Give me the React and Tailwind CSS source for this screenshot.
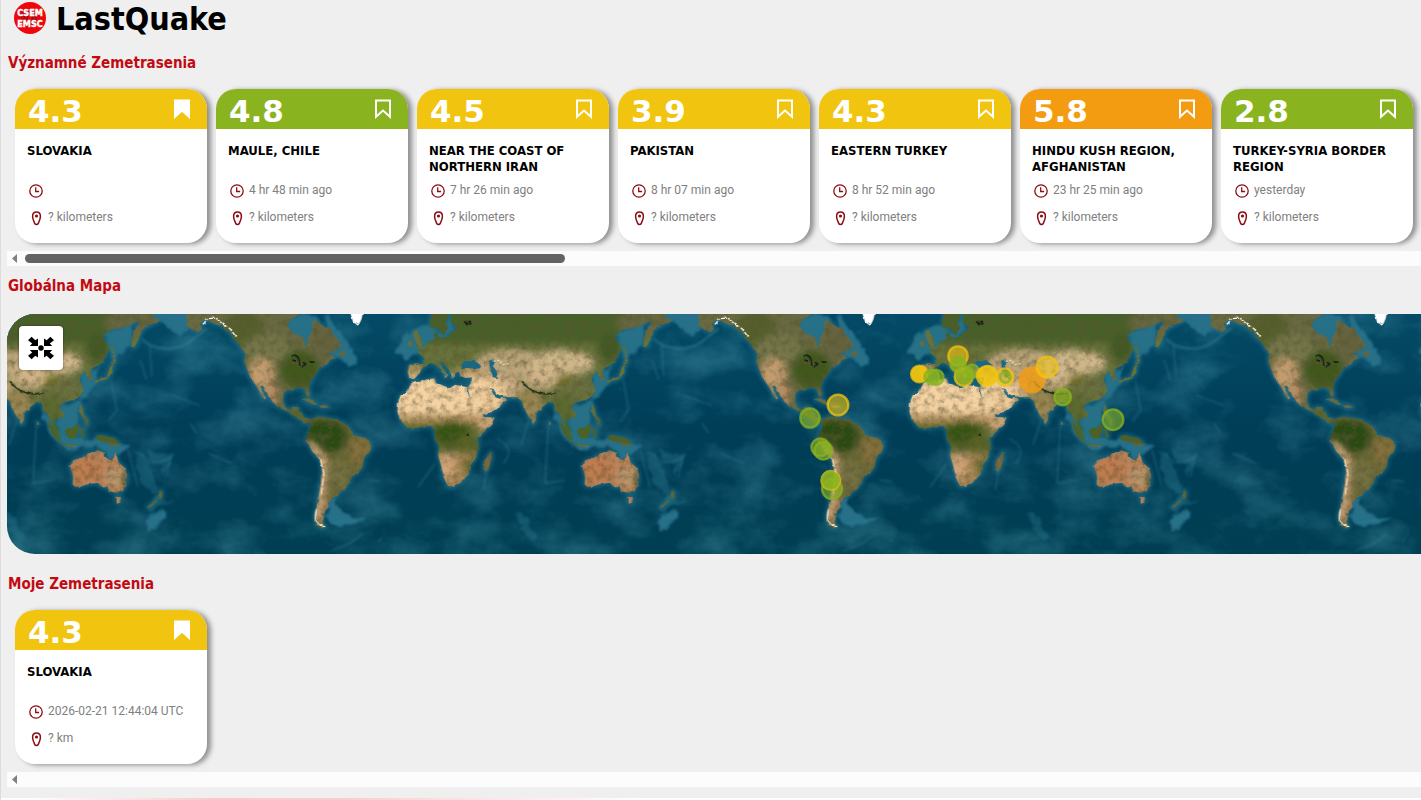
import { useState } from "react"

const quakes = [
  { id: 1, mag: "4.3", region: "SLOVAKIA", time: "", distance: "? kilometers", level: "yellow", saved: true },
  { id: 2, mag: "4.8", region: "MAULE, CHILE", time: "4 hr 48 min ago", distance: "? kilometers", level: "green" },
  { id: 3, mag: "4.5", region: "NEAR THE COAST OF NORTHERN IRAN", time: "7 hr 26 min ago", distance: "? kilometers", level: "yellow" },
  { id: 4, mag: "3.9", region: "PAKISTAN", time: "8 hr 07 min ago", distance: "? kilometers", level: "yellow" },
  { id: 5, mag: "4.3", region: "EASTERN TURKEY", time: "8 hr 52 min ago", distance: "? kilometers", level: "yellow" },
  { id: 6, mag: "5.8", region: "HINDU KUSH REGION, AFGHANISTAN", time: "23 hr 25 min ago", distance: "? kilometers", level: "orange" },
  { id: 7, mag: "2.8", region: "TURKEY-SYRIA BORDER REGION", time: "yesterday", distance: "? kilometers", level: "green" },
]

const myQuakes = [
  { id: 1, mag: "4.3", region: "SLOVAKIA", time: "2026-02-21 12:44:04 UTC", distance: "? km", level: "yellow", saved: true },
]

const levelClasses = {
  yellow: "bg-[#f1c40f]",
  green: "bg-[#8ab320]",
  orange: "bg-[#f39c12]",
}

const YELLOW = "#f1c40f"
const GREEN = "#8ab320"
const ORANGE = "#f39c12"

// [x, y, radius, ring colour, fill opacity]
const markers = [
  [2758, 222, 25, YELLOW, 0.95],
  [2795, 231, 22, GREEN, 0.7],
  [2808, 232, 23, GREEN, 0.7],
  [2874, 168, 29, YELLOW, 0.6],
  [2874, 193, 23, GREEN, 0.85],
  [2891, 231, 27, YELLOW, 0.6],
  [2894, 224, 25, GREEN, 0.7],
  [2917, 214, 20, GREEN, 0.6],
  [2960, 228, 29, YELLOW, 0.7],
  [2964, 224, 26, YELLOW, 0.5],
  [3014, 231, 26, YELLOW, 0.5],
  [3016, 232, 16, GREEN, 0.3],
  [3096, 240, 37, ORANGE, 0.8],
  [3141, 201, 31, YELLOW, 0.55],
  [3188, 291, 25, GREEN, 0.65],
  [3339, 359, 31, GREEN, 0.6],
  [2514, 315, 31, YELLOW, 0.6],
  [2430, 354, 29, GREEN, 0.65],
  [2461, 442, 27, GREEN, 0.6],
  [2470, 452, 27, GREEN, 0.6],
  [2496, 567, 30, GREEN, 0.6],
  [2492, 541, 28, YELLOW, 0.3],
  [2492, 541, 25, GREEN, 0.85],
]

const EmscLogo = () => (
  <svg className="h-8 w-8" viewBox="0 0 32 32" role="img" aria-label="CSEM EMSC">
    <circle cx="16" cy="16" r="16" fill="#ee060c" />
    <g fill="none" stroke="#8f1015" strokeWidth="1.5">
      <circle cx="16" cy="16" r="3" />
      <circle cx="16" cy="16" r="6" />
      <circle cx="16" cy="16" r="9" opacity="0.5" />
    </g>
    <g fill="#fff" stroke="#fff" strokeWidth="0.4" fontFamily="'DejaVu Sans Condensed', 'DejaVu Sans', sans-serif" fontWeight="700" fontSize="9" textAnchor="middle">
      <text x="16" y="14">CSEM</text>
      <text x="16" y="25">EMSC</text>
    </g>
  </svg>
)

const BookmarkIcon = ({ filled }) => (
  <svg className="h-5 w-4" viewBox="0 0 16 20" fill={filled ? "currentColor" : "none"} stroke="currentColor" strokeWidth="2">
    <path d="M1 1.500h14v16.300l-7-6.300-7 6.300z" />
  </svg>
)

const ClockIcon = () => (
  <svg className="h-4 w-4 shrink-0" viewBox="0 0 16 16" fill="none" stroke="#8e0c14" strokeWidth="1.3">
    <circle cx="8" cy="8" r="6.200" />
    <path d="M7.700 4.300V8.500h3.400" />
  </svg>
)

const PinIcon = () => (
  <svg className="h-4 w-4 shrink-0" viewBox="0 0 16 16" fill="none" stroke="#8e0c14" strokeWidth="1.5">
    <path d="M8.500 1.900c-2.500 0-3.900 1.900-3.900 4.300 0 3.200 1.200 5.200 2 6.900.8 1.900 3 1.900 3.800 0 .8-1.700 2-3.700 2-6.900 0-2.400-1.400-4.300-3.900-4.300z" />
    <circle cx="8.500" cy="6" r="1.600" fill="#8e0c14" stroke="none" />
  </svg>
)

const SectionTitle = ({ children }) => (
  <h2 className="pl-px text-[15px] leading-5 font-bold text-[#c20a12]">{children}</h2>
)

const QuakeCard = ({ quake }) => {
  const [saved, setSaved] = useState(Boolean(quake.saved))

  return (
    <article className="w-48 shrink-0 overflow-hidden rounded-[20px] bg-white shadow-[4px_1px_5px_rgba(0,0,0,0.4)]">
      <div className={`flex h-10 items-center justify-between pr-[17px] pl-[13px] text-white ${levelClasses[quake.level]}`}>
        <span className="pt-[3px] font-['DejaVu_Sans',sans-serif] text-[31px] leading-10 font-bold">{quake.mag}</span>
        <button type="button" aria-label="Bookmark" aria-pressed={saved} onClick={() => setSaved(!saved)}>
          <BookmarkIcon filled={saved} />
        </button>
      </div>
      <div className="px-3 pt-[14px] pb-[17px]">
        <h3 className="h-8 text-[13px] leading-4 font-bold text-black">{quake.region}</h3>
        <div className="mt-2 flex h-4 items-center gap-1 pl-px text-xs leading-[14px] text-[#808080]">
          <ClockIcon />
          <span className="pb-0.5 font-[Roboto,sans-serif] whitespace-nowrap">{quake.time}</span>
        </div>
        <div className="mt-[11px] flex h-4 items-center gap-1 pl-px text-xs leading-[14px] text-[#808080]">
          <PinIcon />
          <span className="pb-0.5 font-[Roboto,sans-serif]">{quake.distance}</span>
        </div>
      </div>
    </article>
  )
}

const ScrollTrack = ({ thumb }) => (
  <div className="flex h-[15px] items-center gap-2 bg-[#fcfcfc] pl-[5px]">
    <svg className="h-[9px] w-[5px]" viewBox="0 0 5 9" fill="#808080">
      <path d="M5 0v9L0 4.500z" />
    </svg>
    {thumb && <div className="h-[9px] w-[38.3%] rounded-full bg-[#636363]" />}
  </div>
)

const QuakeRow = ({ items, thumb }) => (
  <div>
    <div className="flex gap-[9px] overflow-hidden px-2 pt-4 pb-2">
      {items.map((quake) => (
        <QuakeCard key={quake.id} quake={quake} />
      ))}
    </div>
    <ScrollTrack thumb={thumb} />
  </div>
)

const Americas = () => (
  <>
    <path d="M560 30L558 75 575 88 592 97 606 88 602 72 612 60 628 64 645 72 668 80 690 100 702 116 716 132 724 146 736 158 733 185 744 215 752 236 763 248 777 272 790 298 797 297 787 275 780 255 790 262 803 283 822 312 842 325 862 334 882 347 898 358 915 370 928 368 945 372 925 355 908 352 905 338 896 334 896 322 877 320 872 330 858 324 849 305 851 280 862 270 880 268 893 262 914 266 918 282 928 292 931 285 926 262 934 240 950 218 958 203 980 194 990 180 1003 175 1000 163 982 166 1001 152 1025 140 1015 118 1003 108 990 80 975 84 958 68 938 60 936 92 926 112 922 140 914 134 910 112 890 104 874 94 862 78 872 58 900 42 900 30z" />
    <path d="M1014 160l8-7 14 2 1 14-12 3zM905 298l22-4 28 20-20-4zM956 317l20-2 12 7-20 3z" />
    <path d="M930 366L945 353 965 350 990 355 1008 358 1026 368 1050 384 1058 402 1078 410 1096 414 1114 428 1113 446 1100 462 1090 478 1088 502 1072 520 1055 530 1048 550 1033 570 1018 574 1014 588 998 592 988 608 986 622 975 632 972 650 966 662 978 680 966 686 950 676 942 650 950 620 955 590 962 550 966 510 960 480 938 458 925 432 918 424 921 402 932 388z" />
  </>
)

const OldWorld = () => (
  <>
    <path d="M158 30L150 64 152 84 168 86 176 82 182 102 192 108 198 90 205 82 198 66 206 44 215 50 212 72 232 76 222 92 205 108 186 114 172 112 170 92 162 100 163 118 148 124 134 138 112 156 130 172 130 192 88 194 83 216 88 234 102 238 118 220 128 204 150 188 164 192 180 208 196 224 192 236 202 224 188 204 176 184 190 190 205 205 212 224 218 236 226 220 236 210 242 228 258 234 276 232 272 250 264 262 272 288 290 318 304 342 318 344 344 330 366 314 380 300 374 292 358 296 346 292 336 276 330 264 338 266 350 282 366 288 386 292 410 292 424 302 432 324 446 350 460 374 468 366 468 340 488 320 506 306 520 308 526 330 540 344 546 362 560 385 574 408 572 390 560 364 562 354 578 358 590 346 582 330 574 318 590 306 622 298 640 284 646 264 634 240 640 224 654 216 664 240 674 238 668 216 678 200 700 188 716 164 726 140 712 126 706 106 722 90 760 84 788 74 808 62 814 70 800 92 790 118 790 136 800 140 814 114 822 90 850 74 876 62 884 46 884 30z" />
    <path d="M54 306L62 286 84 270 94 250 104 244 130 240 164 235 168 250 186 256 210 264 226 254 262 262 264 278 282 302 298 330 312 352 344 352 334 374 312 396 292 416 296 442 288 474 270 498 266 520 246 546 222 560 204 562 190 528 184 500 174 466 178 440 164 412 164 390 152 378 130 380 100 386 78 382 60 356 52 338z" />
    <path d="M334 454l2 20-10 30-6 12-10-4 2-28zM100 96l12-4 14 30 3 22-24 5 8-14-8-12zM84 124l12-4 2 16-13 6zM745 590l14 2-4 18-8-2z" />
    <path d="M606 498L618 480 640 474 662 460 680 460 690 452 706 456 708 470 732 482 738 456 746 466 752 488 768 502 777 524 776 550 764 574 744 578 728 574 718 562 704 562 690 548 662 552 640 560 620 560 614 552 616 530z" />
    <path d="M684 408l18-2 40 10 18 18-24 4-22-10-26-8zM590 392l18-6 18-14 10 6-10 34-24 6zM536 362l22 22 18 28 2 16-18-14-14-26zM578 430l46 6-2 5-44-6zM638 388l18-4-12 10 8 18-10 2zM636 318l8-2 2 26 12 18 4 16-10-2-6-20-10-16zM878 568l6 8-2 14-14 6zM864 600l4 4-26 22-6-4zM732 176l14 4-8 14-8-2zM728 196l8 2-4 24-18 16-34 12-2-6 38-14zM730 134l6 4 4 34-6 2zM506 364l7 4-1 8-5-2z" />
  </>
)

const LandTint = () => (
  <g filter="url(#soft)">
    <g>
      <rect x="540" y="20" width="500" height="350" fill="#696a42" />
      <ellipse cx="730" cy="90" rx="60" ry="60" fill="#55612f" />
      <ellipse cx="800" cy="145" rx="70" ry="40" fill="#75774a" />
      <ellipse cx="900" cy="210" rx="60" ry="60" fill="#41591f" />
      <ellipse cx="980" cy="120" rx="50" ry="50" fill="#66633f" />
      <ellipse cx="785" cy="220" rx="38" ry="48" fill="#c29c70" />
      <ellipse cx="810" cy="285" rx="24" ry="34" fill="#b88e62" />
      <ellipse cx="885" cy="345" rx="30" ry="16" fill="#536728" />
      <rect x="910" y="340" width="220" height="350" fill="#6d6a38" />
      <ellipse cx="970" cy="410" rx="76" ry="54" fill="#2b4c16" />
      <ellipse cx="1080" cy="450" rx="32" ry="44" fill="#84703c" />
      <ellipse cx="1015" cy="530" rx="34" ry="44" fill="#737042" />
      <ellipse cx="970" cy="630" rx="20" ry="50" fill="#947650" />
      <path d="M925 430l45 45-5 100-15 80" fill="none" stroke="#d8b184" strokeWidth="18" />
    </g>
    <g transform="translate(1140)">
      <rect x="40" y="20" width="860" height="390" fill="#66723a" />
      <rect x="130" y="20" width="600" height="110" fill="#47602a" />
      <ellipse cx="800" cy="70" rx="90" ry="40" fill="#666640" />
      <ellipse cx="105" cy="215" rx="26" ry="24" fill="#b39765" />
      <ellipse cx="270" cy="222" rx="50" ry="16" fill="#bd9d6c" />
      <ellipse cx="390" cy="190" rx="105" ry="42" fill="#bca57a" />
      <ellipse cx="360" cy="260" rx="70" ry="38" fill="#cdae84" />
      <ellipse cx="320" cy="285" rx="60" ry="55" fill="#f0cb9a" />
      <ellipse cx="540" cy="190" rx="100" ry="38" fill="#d0b78a" />
      <ellipse cx="485" cy="238" rx="56" ry="28" fill="#d0b487" />
      <ellipse cx="560" cy="240" rx="34" ry="20" fill="#77742d" />
      <ellipse cx="600" cy="265" rx="44" ry="36" fill="#697040" />
      <ellipse cx="690" cy="145" rx="36" ry="44" fill="#3f5a26" />
      <ellipse cx="450" cy="320" rx="40" ry="46" fill="#9b8753" />
      <ellipse cx="550" cy="325" rx="36" ry="40" fill="#5c6a33" />
      <rect x="530" y="360" width="240" height="84" fill="#4b6426" />
      <rect x="40" y="232" width="260" height="120" fill="#f4d2a2" />
      <rect x="40" y="342" width="320" height="26" fill="#b3925f" />
      <rect x="40" y="368" width="240" height="90" fill="#5f6a2c" />
      <ellipse cx="215" cy="400" rx="55" ry="38" fill="#345412" />
      <ellipse cx="320" cy="365" rx="34" ry="34" fill="#c7a273" />
      <ellipse cx="265" cy="440" rx="40" ry="40" fill="#596528" />
      <rect x="160" y="460" width="130" height="110" fill="#aa8857" />
      <ellipse cx="200" cy="500" rx="26" ry="40" fill="#d0a477" />
      <ellipse cx="270" cy="500" rx="24" ry="26" fill="#716f36" />
      <ellipse cx="322" cy="486" rx="16" ry="36" fill="#8a6c30" />
      <rect x="590" y="444" width="200" height="180" fill="#b98259" />
      <ellipse cx="655" cy="510" rx="44" ry="34" fill="#bf7c50" />
      <ellipse cx="740" cy="530" rx="30" ry="30" fill="#bd9970" />
      <ellipse cx="776" cy="550" rx="14" ry="34" fill="#67653a" />
      <rect x="830" y="560" width="60" height="70" fill="#68682f" />
    </g>
  </g>
)

const WorldMap = () => (
  <svg className="block h-60 w-full" viewBox="21 42 4242 720" preserveAspectRatio="xMinYMin slice" role="img" aria-label="Globálna Mapa">
    <defs>
      <filter id="soft" x="-5%" y="-5%" width="110%" height="110%">
        <feGaussianBlur stdDeviation="9" />
      </filter>
      <filter id="haze" x="-20%" y="-20%" width="140%" height="140%">
        <feGaussianBlur stdDeviation="6" />
      </filter>
      <filter id="ridge" x="-20%" y="-20%" width="140%" height="140%">
        <feGaussianBlur stdDeviation="2.5" />
      </filter>
      <filter id="grain" x="0" y="0" width="100%" height="100%">
        <feTurbulence type="fractalNoise" baseFrequency="0.05" numOctaves="4" seed="8" result="n" />
        <feColorMatrix in="n" type="matrix" values="0 0 0 0 0.1  0 0 0 0 0.09  0 0 0 0 0.03  1.5 0 0 0 -0.6" result="shade" />
        <feComposite in="shade" in2="SourceGraphic" operator="in" result="cut" />
        <feMerge>
          <feMergeNode in="SourceGraphic" />
          <feMergeNode in="cut" />
        </feMerge>
      </filter>
      <filter id="swell" x="0" y="0" width="100%" height="100%">
        <feTurbulence type="fractalNoise" baseFrequency="0.006 0.009" numOctaves="5" seed="3" />
        <feColorMatrix type="matrix" values="0 0 0 0 0.1  0 0 0 0 0.4  0 0 0 0 0.5  1.1 0 0 0 -0.46" />
      </filter>
      <filter id="shelf" x="-5%" y="-5%" width="110%" height="110%">
        <feTurbulence type="fractalNoise" baseFrequency="0.03" numOctaves="3" seed="5" result="n" />
        <feDisplacementMap in="SourceGraphic" in2="n" scale="30" xChannelSelector="R" yChannelSelector="G" />
        <feGaussianBlur stdDeviation="3" />
      </filter>
      <filter id="coast" x="-2%" y="-2%" width="104%" height="104%">
        <feTurbulence type="fractalNoise" baseFrequency="0.06" numOctaves="2" seed="5" result="n" />
        <feDisplacementMap in="SourceGraphic" in2="n" scale="9" xChannelSelector="R" yChannelSelector="G" />
      </filter>
      <linearGradient id="sea" x1="0" x2="0" y1="0" y2="1">
        <stop offset="0" stopColor="#044a66" />
        <stop offset="0.5" stopColor="#003d57" />
        <stop offset="1" stopColor="#003f53" />
      </linearGradient>
      <mask id="land" maskUnits="userSpaceOnUse" x="500" y="0" width="1600" height="800">
        <g fill="#fff">
          <Americas />
          <g transform="translate(1140)">
            <OldWorld />
          </g>
        </g>
        <g fill="#000" transform="translate(1140)">
          <path d="M244 192l10-10 16 2 10-4 20 14 2 10-18 4-22-4-16 4zM328 182l14-4 4 10-8 10 12 16 4 20-16-2-4-20-6-16z" />
        </g>
      </mask>
      <g id="world">
        <g filter="url(#haze)" fill="#22708a" stroke="#22708a" strokeWidth="9" strokeLinejoin="round" opacity="0.8">
          <Americas />
          <g transform="translate(1140)">
            <OldWorld />
          </g>
        </g>
        <g fill="#286f88" filter="url(#shelf)">
          <path d="M470 30h100l-5 60-20 22-36-20-50-50zM860 42h90v60l-30 45-60-60zM975 42l50 60 40 60 10 30-35 8-50-40zM1000 590l-30 60 15 25 60 5 50-20-70-20z" />
          <g transform="translate(1140)">
            <path d="M70 110l70-40 50 30 20-60 10 50-60 40-80 50-30-30zM700 100l100-40-15 70-45 60-35-90zM640 220l60-20-40 90-25 10zM520 320l60 80 120 20 90 20-60 40-30-40-100 8-60-50zM590 310l50-10-10 80-50 30-15-50zM840 640l50-8 5 12-30 36-34 14z" />
            <path d="M860 585l40 20 35 0-60 16-40 24 10-30zM800 460l24 0 40 90 10 30-30 0-30-50zM840 452l76 14-26 70-4-50-40 0zM400 635l30 10 40 60-6 20-30-20-20-50z" opacity="0.45" />
          </g>
        </g>
        <g fill="none" stroke="#3c829a" strokeWidth="4" opacity="0.5" filter="url(#ridge)">
          <path d="M427 118c30 30 90 38 135 12l60-45" strokeWidth="7" />
          <path d="M448 130l8 100M515 285l85 32M440 240l-20-60M1000 670l90-15q80 0 65 50l-20 20M990 755l60-25 40-30M625 460l70 30M570 370l20 30M1100 540l40 5" />
          <path d="M1092 660c50-20 90 30 50 60" stroke="#062f44" />
          <g transform="translate(1140)">
            <path d="M505 375l-10 175 60-10M350 415q60 30 20 75M445 365l-22 70M730 240l16 90-25 35M820 460q30 50 90 10l-15 60M780 450l30 110M165 490l-50 70M320 510l-10 60" />
          </g>
        </g>
        <g filter="url(#coast)">
          <g mask="url(#land)">
            <g filter="url(#grain)">
              <LandTint />
            </g>
          </g>
          <path d="M1048 30h42l-5 26-10 22-16-12z" fill="#fff" />
          <g fill="none" stroke="#fff" strokeLinecap="round">
            <path d="M610 72l12-16 26-2 20 18 22 14 16 22" strokeWidth="4" strokeDasharray="10 7 22 9" />
            <path d="M948 630l-2 30 14 16 14 4" strokeWidth="3" />
            <path d="M962 480l10 40-8 60" stroke="#e8cfae" strokeWidth="5" strokeDasharray="20 9" />
          </g>
          <path d="M872 170l12-6 12 8 4 26M890 184l-12-4M910 186l8 6-12 10M928 186l14 0" fill="none" stroke="#0c1c1c" strokeWidth="4" />
          <path d="M1566 244q36 50 100 34" fill="none" stroke="#2a331f" strokeWidth="5" />
          <path d="M1395 66l6 10M1408 62l2 12M1401 404l6 4" stroke="#0b1a12" strokeWidth="8" />
          <path d="M1480 184l20-4 6 14 22-4" fill="none" stroke="#e6d9c6" strokeWidth="4" strokeDasharray="7 5" />
        </g>
      </g>
    </defs>
    <rect x="0" y="42" width="6200" height="720" fill="url(#sea)" />
    <rect x="0" y="42" width="4300" height="720" filter="url(#swell)" opacity="0.7" />
    <use href="#world" x="-1536" />
    <use href="#world" />
    <use href="#world" x="1536" />
    <use href="#world" x="3072" />
    {markers.map(([x, y, r, color, fill], i) => (
      <circle key={i} cx={x} cy={y} r={r} fill={color} fillOpacity={fill} stroke={color} strokeWidth="7" strokeOpacity="0.75" />
    ))}
  </svg>
)

const CollapseIcon = () => (
  <svg className="h-[26px] w-[26px]" viewBox="0 0 26 26">
    <defs>
      <path id="arrow" d="M10 10H1.800l2.400-2.400L0 4.200 3.600.8l3.700 3.400L10 2.600z" />
    </defs>
    <circle cx="13" cy="13" r="2.700" />
    <use href="#arrow" transform="translate(0 1)" />
    <use href="#arrow" transform="translate(26 1) scale(-1 1)" />
    <use href="#arrow" transform="translate(0 25) scale(1 -1)" />
    <use href="#arrow" transform="translate(26 25) scale(-1 -1)" />
  </svg>
)

const App = () => {
  return (
    <div className="min-h-screen overflow-hidden border-l border-[#dcdcdc] bg-[#efefef] pl-1.5 font-['DejaVu_Sans_Condensed','DejaVu_Sans',sans-serif]">
      <header className="flex h-[53px] items-start gap-2.5 pl-[7px]">
        <div className="pt-0.5">
          <EmscLogo />
        </div>
        <h1 className="text-[32px] leading-[38px] font-bold text-black">LastQuake</h1>
      </header>

      <section>
        <SectionTitle>Významné Zemetrasenia</SectionTitle>
        <QuakeRow items={quakes} thumb />
      </section>

      <section className="pt-[10px]">
        <SectionTitle>Globálna Mapa</SectionTitle>
        <div className="relative mt-[18px] overflow-hidden rounded-l-[28px]">
          <WorldMap />
          <button
            type="button"
            aria-label="Collapse map"
            className="absolute top-3 left-3 flex h-11 w-11 items-center justify-center rounded-sm bg-white shadow-[0_0_2px_rgba(0,0,0,0.6)]"
          >
            <CollapseIcon />
          </button>
        </div>
      </section>

      <section className="pt-5">
        <SectionTitle>Moje Zemetrasenia</SectionTitle>
        <QuakeRow items={myQuakes} />
      </section>

      <footer className="mt-[11px] -ml-1.5 h-0.5 bg-[linear-gradient(90deg,#ffffff_2%,#f9c9cd_15%,#f9cdd0_24%,#ffffff_45%)]" />
    </div>
  )
}

export default App
